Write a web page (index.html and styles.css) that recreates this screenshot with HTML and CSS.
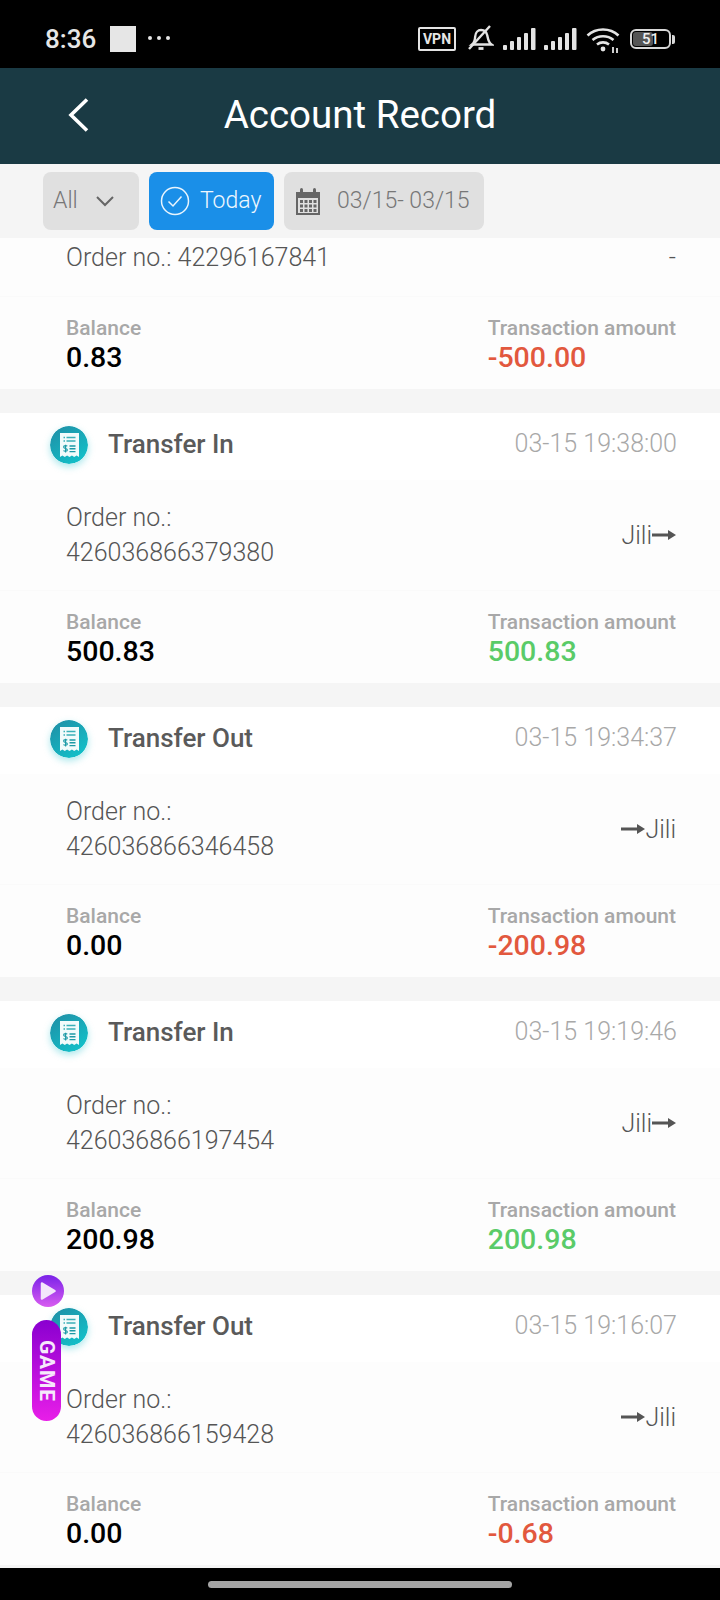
FILE: index.html
```html
<!DOCTYPE html>
<html lang="en">
<head>
  <meta charset="UTF-8">
  <meta name="viewport" content="width=device-width, initial-scale=1.0">
  <title>Account Record</title>
  <link rel="stylesheet" href="styles.css">
</head>
<body>
  <svg class="defs" width="0" height="0">
    <defs>
      <linearGradient id="tealGrad" x1="0.1" y1="0" x2="0.8" y2="1">
        <stop offset="0" stop-color="#1f8fa6"/>
        <stop offset="1" stop-color="#12c2ca"/>
      </linearGradient>
      <symbol id="receipt" viewBox="0 0 38 38">
        <circle cx="19" cy="19" r="19" fill="url(#tealGrad)"/>
        <path d="M10 7h19v24l-2.400-1.600-2.400 1.600-2.300-1.600-2.400 1.600-2.400-1.600-2.300 1.600-2.400-1.600-2.400 1.600z" fill="#f2fbfb"/>
        <path d="M13.500 11.500h1.500M16.500 11.500h9M13.500 15h1.500M16.500 15h9" stroke="#3bb0b8" stroke-width="1.300"/>
        <path d="M19.500 20h6M19.500 22.800h6M19.500 25.600h6" stroke="#1d9aa6" stroke-width="1.400"/>
        <path d="M17.200 20.200c-.4-.8-3.600-1-3.600.7 0 2 3.800 1.100 3.800 3.100 0 1.600-3.300 1.500-3.900.5M15.600 18.800v7.800" fill="none" stroke="#1d9aa6" stroke-width="1.100"/>
      </symbol>
      <symbol id="arrow" viewBox="0 0 24 12">
        <path d="M0 4.500h16V1l8 5-8 5V7.500H0z" fill="#555"/>
      </symbol>
    </defs>
  </svg>

  <div class="page">
    <div class="statusbar">
      <div class="status-left">
        <span class="clock">8:36</span>
        <span class="status-square"></span>
        <span class="status-dots"><i></i><i></i><i></i></span>
      </div>
      <div class="status-right">
        <span class="vpn">VPN</span>
        <svg class="bell" width="26" height="28" viewBox="0 0 26 28" fill="none" stroke="#e4e4e4" stroke-width="2.400">
          <path d="M4 20.500c2.500-2 3-4 3.200-8 .2-4 2.800-6.500 5.800-6.500s5.600 2 6.300 5.500c.7 3.500 1.200 7 4.200 9H4z"/>
          <path d="M1 25L22 2" stroke-width="2.400"/>
          <path d="M10.500 24.500h5" stroke-width="2.800"/>
        </svg>
        <svg class="signal" width="33" height="22" viewBox="0 0 33 22" fill="#e4e4e4">
          <rect x="0" y="17" width="4" height="5" rx="1"/><rect x="7" y="13" width="4" height="9" rx="1"/><rect x="14" y="9" width="4" height="13" rx="1"/><rect x="21" y="5" width="4" height="17" rx="1"/><rect x="28" y="0" width="4.500" height="22" rx="1"/>
        </svg>
        <svg class="signal" width="33" height="22" viewBox="0 0 33 22" fill="#e4e4e4">
          <rect x="0" y="17" width="4" height="5" rx="1"/><rect x="7" y="13" width="4" height="9" rx="1"/><rect x="14" y="9" width="4" height="13" rx="1"/><rect x="21" y="5" width="4" height="17" rx="1"/><rect x="28" y="0" width="4.500" height="22" rx="1"/>
        </svg>
        <svg class="wifi" width="34" height="26" viewBox="0 0 34 26" fill="none" stroke="#e4e4e4" stroke-width="2.600">
          <path d="M1.500 8.500C10 .5 24 .5 32.500 8.500"/>
          <path d="M6.500 13c6-5 15-5 21 0"/>
          <path d="M11 17.500c3.500-2.800 8.500-2.800 12 0"/>
          <circle cx="17" cy="22" r="2.400" fill="#e4e4e4" stroke="none"/>
          <path d="M27 20v6M31 21v5" stroke-width="1.800"/>
        </svg>
        <div class="battery">
          <div class="battery-body"><span class="battery-fill"></span><span class="battery-num">51</span></div>
          <span class="battery-tip"></span>
        </div>
      </div>
    </div>

    <header class="topbar">
      <svg class="back" width="24" height="36" viewBox="0 0 24 36" fill="none" stroke="#fff" stroke-width="3.600">
        <path d="M20 2.500L4 18l16 15.500"/>
      </svg>
      <h1>Account Record</h1>
    </header>

    <div class="filters">
      <div class="chip chip-all">
        <span>All</span>
        <svg width="18" height="11" viewBox="0 0 18 11" fill="none" stroke="#666" stroke-width="2"><path d="M1 1l8 8 8-8"/></svg>
      </div>
      <div class="chip chip-today">
        <svg width="30" height="30" viewBox="0 0 30 30" fill="none" stroke="#e8f4fd" stroke-width="1.500"><circle cx="15" cy="15" r="13.500"/><path d="M8.500 15.500l4.500 4.500 8.500-9.500"/></svg>
        <span>Today</span>
      </div>
      <div class="chip chip-date">
        <svg width="26" height="28" viewBox="0 0 26 28" fill="#666">
          <path d="M1 5h4V3h3v2h10V3h3v2h4v23H1zM3 11v15h20V11z"/>
          <rect x="5" y="1" width="3" height="6" rx="1.500"/><rect x="18" y="1" width="3" height="6" rx="1.500"/>
          <path d="M5 13h3v3H5zM9.500 13h3v3h-3zM14 13h3v3h-3zM18.500 13h3v3h-3zM5 17.500h3v3H5zM9.500 17.500h3v3h-3zM14 17.500h3v3h-3zM18.500 17.500h3v3h-3zM5 22h3v3H5zM9.500 22h3v3h-3zM14 22h3v3h-3zM18.500 22h3v3h-3z"/>
        </svg>
        <span>03/15- 03/15</span>
      </div>
    </div>

    <main class="list">
      <section class="card">
        <div class="order order-cut">
          <span>Order no.: 42296167841</span>
          <span>-</span>
        </div>
        <div class="totals">
          <div class="total"><label>Balance</label><b>0.83</b></div>
          <div class="total total-right"><label>Transaction amount</label><b class="minus">-500.00</b></div>
        </div>
      </section>

      <section class="card">
        <div class="card-head">
          <svg class="receipt" width="38" height="38"><use href="#receipt"/></svg>
          <h2>Transfer In</h2>
          <time>03-15 19:38:00</time>
        </div>
        <div class="order">
          <span>Order no.:<br>426036866379380</span>
          <span class="game-name">Jili<svg width="24" height="12"><use href="#arrow"/></svg></span>
        </div>
        <div class="totals">
          <div class="total"><label>Balance</label><b>500.83</b></div>
          <div class="total total-right"><label>Transaction amount</label><b class="plus">500.83</b></div>
        </div>
      </section>

      <section class="card">
        <div class="card-head">
          <svg class="receipt" width="38" height="38"><use href="#receipt"/></svg>
          <h2>Transfer Out</h2>
          <time>03-15 19:34:37</time>
        </div>
        <div class="order">
          <span>Order no.:<br>426036866346458</span>
          <span class="game-name"><svg width="24" height="12"><use href="#arrow"/></svg>Jili</span>
        </div>
        <div class="totals">
          <div class="total"><label>Balance</label><b>0.00</b></div>
          <div class="total total-right"><label>Transaction amount</label><b class="minus">-200.98</b></div>
        </div>
      </section>

      <section class="card">
        <div class="card-head">
          <svg class="receipt" width="38" height="38"><use href="#receipt"/></svg>
          <h2>Transfer In</h2>
          <time>03-15 19:19:46</time>
        </div>
        <div class="order">
          <span>Order no.:<br>426036866197454</span>
          <span class="game-name">Jili<svg width="24" height="12"><use href="#arrow"/></svg></span>
        </div>
        <div class="totals">
          <div class="total"><label>Balance</label><b>200.98</b></div>
          <div class="total total-right"><label>Transaction amount</label><b class="plus">200.98</b></div>
        </div>
      </section>

      <section class="card">
        <div class="card-head">
          <svg class="receipt" width="38" height="38"><use href="#receipt"/></svg>
          <h2>Transfer Out</h2>
          <time>03-15 19:16:07</time>
        </div>
        <div class="order">
          <span>Order no.:<br>426036866159428</span>
          <span class="game-name"><svg width="24" height="12"><use href="#arrow"/></svg>Jili</span>
        </div>
        <div class="totals">
          <div class="total"><label>Balance</label><b>0.00</b></div>
          <div class="total total-right"><label>Transaction amount</label><b class="minus">-0.68</b></div>
        </div>
      </section>
    </main>

    <div class="navbar"><span class="nav-handle"></span></div>

    <div class="float-game">
      <span class="float-play"><svg width="18" height="20" viewBox="0 0 18 20"><path d="M3 2.500L15.500 10 3 17.500z" fill="#f3e6fb" stroke="#f3e6fb" stroke-width="2.500" stroke-linejoin="round"/></svg></span>
      <span class="float-pill">GAME</span>
    </div>
  </div>
</body>
</html>
```

FILE: styles.css
```css
* { box-sizing: border-box; margin: 0; padding: 0; }
body { background: #f5f5f5; font-family: Roboto, sans-serif; }
.defs { position: absolute; }
.page { position: relative; width: 720px; height: 1600px; overflow: hidden;
  display: flex; flex-direction: column; background: #f5f5f5;
}

.statusbar { height: 68px; flex: none; background: #000; color: #e6e6e6;
  display: flex; justify-content: space-between; align-items: center;
  padding: 10px 45px 0 45px;
}
.status-left { display: flex; align-items: center; }
.clock { font-size: 26px; font-weight: 500; width: 65px; }
.status-square { width: 26px; height: 26px; background: #e6e6e6; }
.status-dots { display: flex; gap: 5px; margin-left: 12px; margin-top: -2px; }
.status-dots i { width: 4px; height: 4px; border-radius: 50%; background: #e6e6e6; }
.status-right { display: flex; align-items: center; }
.vpn { width: 38px; height: 24px; border: 2px solid #e4e4e4; border-radius: 2px;
  font-size: 14px; font-weight: 700; line-height: 20px; text-align: center; margin-right: 12px;
}
.bell { margin-right: 9px; margin-top: -2px; }
.signal { margin-right: 8px; margin-top: -1px; }
.wifi { margin-left: 1px; margin-right: 10px; margin-top: 1px; }
.battery { display: flex; align-items: center; gap: 1px; }
.battery-body { position: relative; width: 41px; height: 20px; border: 2px solid #d8d8d8; border-radius: 6px; overflow: hidden; }
.battery-fill { position: absolute; left: 1px; top: 1px; bottom: 1px; width: 20px; background: #555; border-radius: 3px; }
.battery-num { position: absolute; left: 0; right: 0; top: 0; text-align: center;
  font-size: 15px; font-weight: 500; line-height: 17px; color: #eee;
}
.battery-tip { width: 3px; height: 9px; background: #d8d8d8; border-radius: 0 2px 2px 0; }

.topbar { height: 96px; flex: none; background: #1a3a44; position: relative;
  display: flex; align-items: center; justify-content: center; padding-bottom: 4px;
}
.topbar h1 { font-size: 38.5px; font-weight: 400; color: #fff; }
.back { position: absolute; left: 67px; top: 29px; }

.filters { height: 74px; flex: none; background: #f5f5f5;
  display: flex; align-items: center; gap: 10px; padding: 0 0 0 43px;
}
.chip { height: 58px; border-radius: 8px; background: #e0e0e0; color: #777;
  display: flex; align-items: center;
  font-size: 23px; font-weight: 300;
}
.chip span { margin-top: -2px; }
.chip-all { width: 96px; padding-left: 10px; gap: 18px; }
.chip-today { width: 125px; background: #1a8fe8; color: #eef7fe; padding-left: 11px; gap: 10px; }
.chip-date { width: 200px; padding-left: 11px; gap: 16px; }

.list { flex: 1; overflow: hidden; display: flex; flex-direction: column; gap: 24px; }
.card { flex: none; background: #fff; }
.card-head { height: 67px; display: flex; align-items: center; padding: 0 43px 6px 50px; }
.receipt { border-radius: 50%; box-shadow: 0 3px 7px rgba(20,190,200,.35); flex: none; margin-top: 2px; }
.card-head h2 { font-size: 26px; font-weight: 500; color: #5a5a5a; margin-left: 20px; flex: 1; }
.card-head time { font-size: 25px; font-weight: 300; color: #a8a8a8; }

.order { height: 111px; background: #fdfdfd; border-bottom: 1px solid #fafafa;
  display: flex; justify-content: space-between; align-items: center;
  padding: 0 44px 0 66px;
  font-size: 25px; font-weight: 300; line-height: 35px; color: #555;
}
.order-cut { height: 59px; align-items: flex-start; padding-top: 2px; }
.game-name { display: flex; align-items: center; }

.totals { height: 92px; background: #fdfdfd; display: flex; justify-content: space-between;
  align-items: center; padding: 0 44px 0 66px;
}
.total { display: flex; flex-direction: column; }
.total label { font-size: 21px; font-weight: 500; line-height: 28px; padding-top: 1px; color: #a8a8a8; }
.total b { font-size: 28.5px; font-weight: 500; line-height: 31px; color: #000; }
.total b.minus { color: #e2583e; }
.total b.plus { color: #5acb68; }

.navbar { height: 32px; flex: none; background: #000; display: flex; justify-content: center; align-items: center; padding-top: 1px; }
.nav-handle { width: 304px; height: 7px; border-radius: 4px; background: #a5a5a5; }

.float-game { position: absolute; left: 32px; top: 1275px; width: 32px;
  display: flex; flex-direction: column; align-items: flex-start; gap: 13px;
}
.float-play { width: 32px; height: 32px; border-radius: 50%; flex: none;
  background: linear-gradient(#7a22e8, #d85cf0);
  display: flex; align-items: center; justify-content: center;
}
.float-pill { width: 29px; height: 101px; border-radius: 15px;
  background: linear-gradient(#8a00d0, #e81ee8);
  color: #f6e8fb; font-size: 21px; font-weight: 700; letter-spacing: .8px;
  writing-mode: vertical-rl; text-align: center; line-height: 29px;
}
```
